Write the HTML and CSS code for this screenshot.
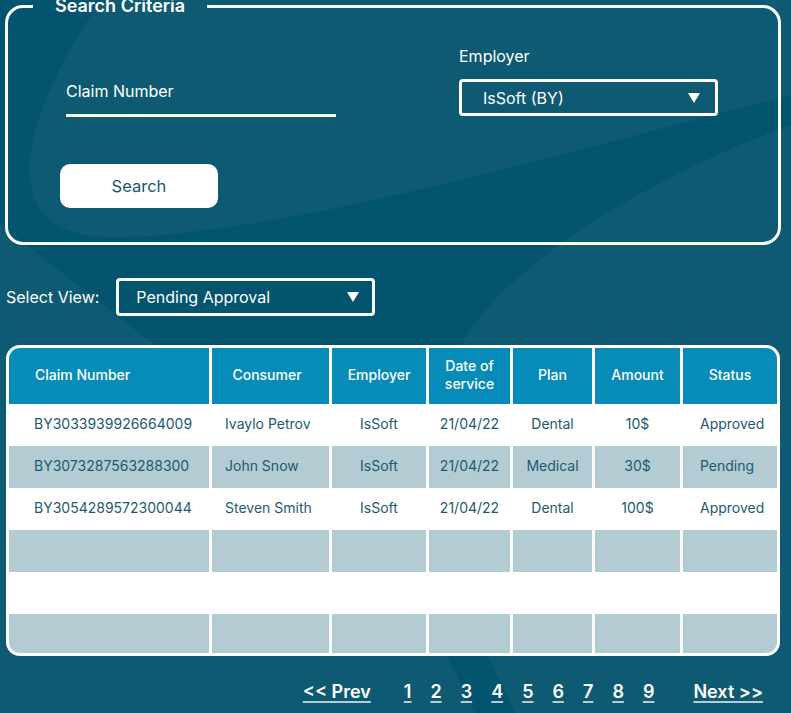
FILE: index.html
```html
<!DOCTYPE html>
<html lang="en">
<head>
<meta charset="utf-8">
<title>Claims</title>
<link rel="stylesheet" href="styles.css">
</head>
<body>
<div class="page">
  <fieldset class="criteria">
    <legend class="criteria-title">Search Criteria</legend>
    <div class="criteria-fields">
      <div class="field claim-field">
        <label class="field-label">Claim Number</label>
        <div class="line-input"></div>
      </div>
      <div class="field employer-field">
        <label class="field-label">Employer</label>
        <div class="select employer-select">
          <span>IsSoft (BY)</span>
          <svg class="caret" width="12" height="10" viewBox="0 0 12 10"><path d="M0 0H12L6 10Z" fill="#fff"/></svg>
        </div>
      </div>
    </div>
    <button class="search-btn" type="button">Search</button>
  </fieldset>

  <div class="view-row">
    <span class="view-label">Select View:</span>
    <div class="select view-select">
      <span>Pending Approval</span>
      <svg class="caret" width="12" height="10" viewBox="0 0 12 10"><path d="M0 0H12L6 10Z" fill="#fff"/></svg>
    </div>
  </div>

  <div class="table">
    <div class="row head">
      <div class="cell c1">Claim Number</div>
      <div class="cell hc2">Consumer</div>
      <div class="cell">Employer</div>
      <div class="cell two-line">Date of<br>service</div>
      <div class="cell">Plan</div>
      <div class="cell">Amount</div>
      <div class="cell">Status</div>
    </div>
    <div class="row white">
      <div class="cell c1">BY3033939926664009</div>
      <div class="cell c2">Ivaylo Petrov</div>
      <div class="cell">IsSoft</div>
      <div class="cell">21/04/22</div>
      <div class="cell">Dental</div>
      <div class="cell">10$</div>
      <div class="cell c7">Approved</div>
    </div>
    <div class="row light">
      <div class="cell c1">BY3073287563288300</div>
      <div class="cell c2">John Snow</div>
      <div class="cell">IsSoft</div>
      <div class="cell">21/04/22</div>
      <div class="cell">Medical</div>
      <div class="cell">30$</div>
      <div class="cell c7">Pending</div>
    </div>
    <div class="row white">
      <div class="cell c1">BY3054289572300044</div>
      <div class="cell c2">Steven Smith</div>
      <div class="cell">IsSoft</div>
      <div class="cell">21/04/22</div>
      <div class="cell">Dental</div>
      <div class="cell">100$</div>
      <div class="cell c7">Approved</div>
    </div>
    <div class="row light">
      <div class="cell"></div><div class="cell"></div><div class="cell"></div><div class="cell"></div><div class="cell"></div><div class="cell"></div><div class="cell"></div>
    </div>
    <div class="row white">
      <div class="cell"></div><div class="cell"></div><div class="cell"></div><div class="cell"></div><div class="cell"></div><div class="cell"></div><div class="cell"></div>
    </div>
    <div class="row light">
      <div class="cell"></div><div class="cell"></div><div class="cell"></div><div class="cell"></div><div class="cell"></div><div class="cell"></div><div class="cell"></div>
    </div>
  </div>

  <nav class="pager">
    <a class="pg prev" href="#">&lt;&lt; Prev</a>
    <a class="pg" href="#">1</a>
    <a class="pg" href="#">2</a>
    <a class="pg" href="#">3</a>
    <a class="pg" href="#">4</a>
    <a class="pg" href="#">5</a>
    <a class="pg" href="#">6</a>
    <a class="pg" href="#">7</a>
    <a class="pg" href="#">8</a>
    <a class="pg" href="#">9</a>
    <a class="pg next" href="#">Next &gt;&gt;</a>
  </nav>
</div>
</body>
</html>
```

FILE: styles.css
```css
html, body {
  margin: 0;
  padding: 0;
}

body {
  width: 791px;
  height: 713px;
  overflow: hidden;
  font-family: Inter, "Noto Sans", sans-serif;
  color: #fff;
  background-color: #0e5a72;
  background-image: url("data:image/svg+xml,%3Csvg xmlns='http://www.w3.org/2000/svg' width='791' height='713' viewBox='0 0 791 713'%3E%3Cpath fill='%2302546f' d='M0 0 L101 0 C60 60 25 130 30 180 C35 225 70 240 130 237 C300 228 500 170 791 95 L791 125 C640 180 500 270 460 347 C450 420 470 560 485 650 L515 713 L475 713 L444 650 L157 347 L20 240 L0 225 Z'/%3E%3C/svg%3E");
  background-repeat: no-repeat;
  background-size: 791px 713px;
}

.page {
  padding: 0 10px 0 5px;
}

/* ---------- Search criteria ---------- */
.criteria {
  margin: 0;
  width: 770px;
  padding: 0 0 34px 0;
  border: 3px solid #fff;
  border-radius: 18px;
  box-sizing: content-box;
}

.criteria-title {
  margin-left: 25px;
  padding: 0 22px;
  font-size: 18px;
  font-weight: 600;
  line-height: 12px;
  color: #fff;
}

.criteria-fields {
  display: flex;
  align-items: flex-start;
}

.field-label {
  display: block;
  font-size: 16px;
  line-height: 20px;
  color: #fff;
}

.claim-field {
  margin-left: 58px;
  margin-top: 69px;
  width: 270px;
}

.line-input {
  margin-top: 13px;
  border-bottom: 3px solid #fff;
}

.employer-field {
  margin-left: 123px;
  margin-top: 34px;
}

.select {
  display: flex;
  align-items: center;
  justify-content: space-between;
  box-sizing: border-box;
  border: 3px solid #fff;
  border-radius: 4px;
  font-size: 16px;
  color: #fff;
}

.employer-select {
  margin-top: 13px;
  width: 259px;
  height: 37px;
  padding: 0 15px 0 21px;
}

.search-btn {
  display: block;
  margin: 47px 0 0 52px;
  width: 158px;
  height: 44px;
  border: 0;
  border-radius: 10px;
  background: #fff;
  color: #135a72;
  font-family: Inter, "Noto Sans", sans-serif;
  font-size: 16.5px;
  padding: 0;
}

/* ---------- View row ---------- */
.view-row {
  display: flex;
  align-items: center;
  margin-top: 33px;
  gap: 17px;
}

.view-label {
  font-size: 16px;
  margin-left: 1px;
}

.view-select {
  width: 259px;
  height: 38px;
  padding: 0 13px 0 17px;
}

/* ---------- Table ---------- */
.table {
  margin: 29px 0 0 1px;
  width: 768px;
  height: 305px;
  border: 3px solid #fff;
  border-radius: 14px;
  overflow: hidden;
  background: #fff;
}

.row {
  display: grid;
  grid-template-columns: 200px 117px 94px 81px 79px 85px 94px;
  column-gap: 3px;
  height: 42px;
  font-size: 14px;
  color: #1c5a72;
}

.row.head {
  height: 56px;
  color: #fff;
  font-weight: 500;
}

.cell {
  display: flex;
  align-items: center;
  justify-content: center;
  text-align: center;
  padding-bottom: 3px;
}

.head .cell {
  background: #078cba;
}

.light .cell {
  background: #b3cbd2;
}

.two-line {
  line-height: 18px;
}

.cell.c1 {
  justify-content: flex-start;
  padding-left: 25px;
}

.head .cell.c1 {
  padding-left: 26px;
}

.cell.hc2 {
  padding-right: 7px;
}

.cell.c2 {
  justify-content: flex-start;
  padding-left: 13px;
}

.cell.c7 {
  justify-content: flex-start;
  padding-left: 17px;
}

/* ---------- Pager ---------- */
.pager {
  display: flex;
  justify-content: flex-end;
  gap: 19px;
  margin-top: 26px;
  padding-right: 18px;
  line-height: 20px;
}

.pg {
  color: #fff;
  font-size: 18px;
  font-weight: 600;
  text-decoration: underline;
  text-decoration-color: #b8cbd0;
  text-decoration-thickness: 2px;
  text-underline-offset: 3px;
}

.pg.prev {
  margin-right: 14px;
}

.pg.next {
  margin-left: 20px;
}
```
